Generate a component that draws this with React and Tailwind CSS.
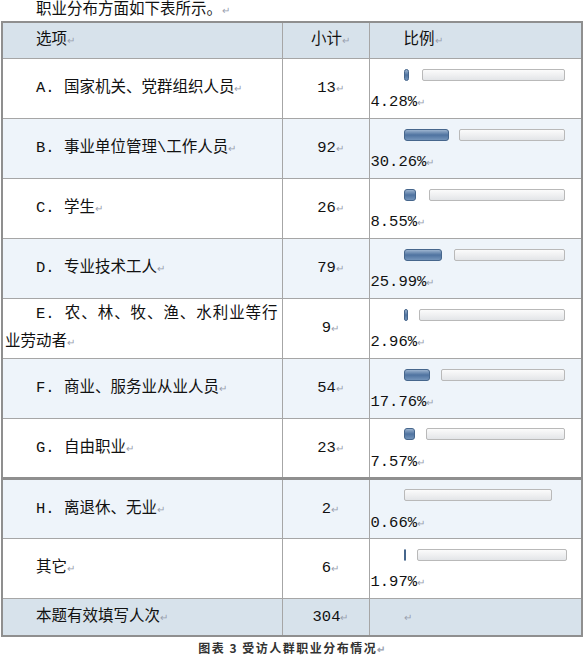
import React from 'react';

const rows = [
  { label: 'A. 国家机关、党群组织人员', count: 13, pct: '4.28%', fill: 5, start: 423, end: 566 },
  { label: 'B. 事业单位管理\\工作人员', count: 92, pct: '30.26%', fill: 45, start: 460, end: 566 },
  { label: 'C. 学生', count: 26, pct: '8.55%', fill: 12, start: 430, end: 566 },
  { label: 'D. 专业技术工人', count: 79, pct: '25.99%', fill: 38, start: 455, end: 566 },
  { label: 'E. 农、林、牧、渔、水利业等行业劳动者', count: 9, pct: '2.96%', fill: 4, start: 420, end: 566 },
  { label: 'F. 商业、服务业从业人员', count: 54, pct: '17.76%', fill: 26, start: 442, end: 566 },
  { label: 'G. 自由职业', count: 23, pct: '7.57%', fill: 11, start: 427, end: 566 },
  { label: 'H. 离退休、无业', count: 2, pct: '0.66%', fill: 0, start: 405, end: 553, pageBreak: true },
  { label: '其它', count: 6, pct: '1.97%', fill: 2, start: 418, end: 568 },
];

const font = { fontFamily: '"Liberation Mono", "Noto Sans CJK SC", monospace' };

function Mark() {
  return <span className="text-[10px] text-gray-400 font-['Noto_Sans_CJK_SC']">↵</span>;
}

// 比例 column: blue filled part, then the empty grey track
function Bar({ fill, start, end }) {
  return (
    <div className="flex items-center h-[27px] pl-[33px]">
      {fill > 0 && (
        <div
          className="h-[12px] rounded-[3px] border border-[#46668c] bg-gradient-to-b from-[#9db4cf] via-[#4f73a0] to-[#7494ba]"
          style={{ width: fill, marginRight: start - 405 - fill }}
        />
      )}
      <div
        className="h-[12px] rounded-[2px] border border-[#b9b9b9] bg-gradient-to-b from-[#fbfbfb] to-[#e3e5e8]"
        style={{ width: end - start }}
      />
    </div>
  );
}

export default function App() {
  return (
    <div className="w-[585px] h-[661px] bg-white text-[15.5px] text-[#111] leading-[27px]" style={font}>
      <p className="pl-[36px] h-[22px] leading-[22px] -mt-[1px]">
        职业分布方面如下表所示。<Mark />
      </p>
      <table className="ml-[1px] w-[580px] border-collapse border-2 border-[#8f8f8f] table-fixed">
        <colgroup>
          <col className="w-[280px]" />
          <col className="w-[87px]" />
          <col className="w-[213px]" />
        </colgroup>
        <thead>
          <tr className="h-[36px] bg-[#d7e2eb]">
            <th className="font-normal text-left pl-[33px] border border-[#a6a6a6]">选项<Mark /></th>
            <th className="font-normal text-center pl-[10px] border border-[#a6a6a6]">小计<Mark /></th>
            <th className="font-normal text-left pl-[34px] border border-[#a6a6a6]">比例<Mark /></th>
          </tr>
        </thead>
        <tbody>
          {rows.map((r, i) => (
            <tr
              key={r.label}
              className={`h-[60px] ${i % 2 === 1 ? 'bg-[#eef4fa]' : 'bg-white'} ${r.pageBreak ? 'border-t-[3px] border-t-[#8f8f8f]' : ''}`}
            >
              <td className="pl-[2px] pr-[4px] border border-[#a6a6a6] text-justify indent-[31px]">
                {r.label}<Mark />
              </td>
              <td className="text-center pl-[10px] border border-[#a6a6a6]">
                {r.count}<Mark />
              </td>
              <td className="pl-[1px] border border-[#a6a6a6] align-middle">
                <Bar fill={r.fill} start={r.start} end={r.end} />
                <div className="h-[27px]">{r.pct}<Mark /></div>
              </td>
            </tr>
          ))}
          <tr className="h-[38px] bg-[#d7e2eb]">
            <td className="pl-[33px] border border-[#a6a6a6]">本题有效填写人次<Mark /></td>
            <td className="text-center pl-[10px] border border-[#a6a6a6]">304<Mark /></td>
            <td className="pl-[34px] border border-[#a6a6a6]"><Mark /></td>
          </tr>
        </tbody>
      </table>
      <p className="text-center text-[12px] leading-[20px] font-semibold tracking-[1.5px] text-[#333] font-['Noto_Sans_CJK_SC'] mt-[1px]">
        图表 3 受访人群职业分布情况<Mark />
      </p>
    </div>
  );
}
